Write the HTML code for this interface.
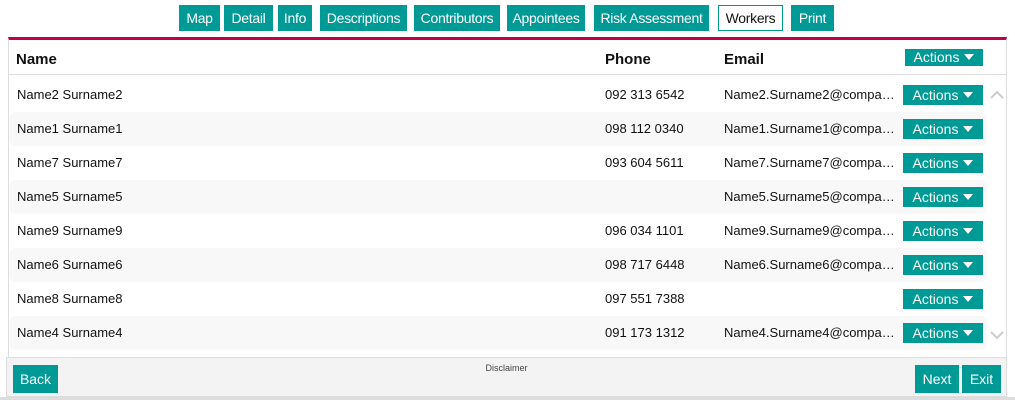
<!DOCTYPE html>
<html><head><style>
*{box-sizing:border-box;margin:0;padding:0}
body{width:1015px;height:400px;background:#fff;font-family:"Liberation Sans",Arial,sans-serif;position:relative;overflow:hidden;color:#111}
.tab{position:absolute;top:5px;height:26px;background:#009a96;color:#fff;font-size:14px;line-height:26px;text-align:center;letter-spacing:-0.3px}
.tab.w{background:#fff;color:#111;border:1px solid #009a96;line-height:24px}
.panel{position:absolute;left:8px;top:37px;width:999px;height:320px;border-top:3px solid #c0004a;border-left:1px solid #ddd;border-right:1px solid #ddd}
.hdr{position:absolute;left:8px;top:40px;width:999px;height:35px;border-bottom:1px solid #ddd;font-weight:bold;font-size:15px}
.hdr span,.row span{position:absolute;top:0}
.row{position:absolute;left:9px;width:978px;height:34px;font-size:13px;line-height:34px;border-radius:6px}
.row.alt{background:#f8f8f8}
.btn{position:absolute;background:#009a96;color:#fff;font-size:14px;text-align:center}
.act{left:894px;top:7px;width:80px;height:20px;line-height:20px}
.tri{display:inline-block;width:0;height:0;border-left:5px solid transparent;border-right:5px solid transparent;border-top:6px solid #fff;margin-left:5px;vertical-align:2px}
.foot{position:absolute;left:6px;top:357px;width:1001px;height:40px;background:#f3f3f3;border:1px solid #ddd}
</style></head><body>
<div class="tab" style="left:179px;width:41px">Map</div>
<div class="tab" style="left:224px;width:49px">Detail</div>
<div class="tab" style="left:278px;width:34px">Info</div>
<div class="tab" style="left:320px;width:87px">Descriptions</div>
<div class="tab" style="left:414px;width:86px">Contributors</div>
<div class="tab" style="left:507px;width:78px">Appointees</div>
<div class="tab" style="left:594px;width:115px">Risk Assessment</div>
<div class="tab w" style="left:718px;width:65px">Workers</div>
<div class="tab" style="left:791px;width:43px">Print</div>
<div class="panel"></div>
<div class="hdr">
<span style="left:8px;top:11px">Name</span>
<span style="left:597px;top:11px">Phone</span>
<span style="left:716px;top:11px">Email</span>
<div class="btn" style="left:897px;top:9px;width:78px;height:17px;line-height:17px;font-weight:normal">Actions<i class="tri"></i></div>
</div>
<div class="row" style="top:78px"><span style="left:8px">Name2 Surname2</span><span style="left:596px">092 313 6542</span><span style="left:715px">Name2.Surname2@compa…</span><div class="btn act">Actions<i class="tri"></i></div></div>
<div class="row alt" style="top:112px"><span style="left:8px">Name1 Surname1</span><span style="left:596px">098 112 0340</span><span style="left:715px">Name1.Surname1@compa…</span><div class="btn act">Actions<i class="tri"></i></div></div>
<div class="row" style="top:146px"><span style="left:8px">Name7 Surname7</span><span style="left:596px">093 604 5611</span><span style="left:715px">Name7.Surname7@compa…</span><div class="btn act">Actions<i class="tri"></i></div></div>
<div class="row alt" style="top:180px"><span style="left:8px">Name5 Surname5</span><span style="left:715px">Name5.Surname5@compa…</span><div class="btn act">Actions<i class="tri"></i></div></div>
<div class="row" style="top:214px"><span style="left:8px">Name9 Surname9</span><span style="left:596px">096 034 1101</span><span style="left:715px">Name9.Surname9@compa…</span><div class="btn act">Actions<i class="tri"></i></div></div>
<div class="row alt" style="top:248px"><span style="left:8px">Name6 Surname6</span><span style="left:596px">098 717 6448</span><span style="left:715px">Name6.Surname6@compa…</span><div class="btn act">Actions<i class="tri"></i></div></div>
<div class="row" style="top:282px"><span style="left:8px">Name8 Surname8</span><span style="left:596px">097 551 7388</span><div class="btn act">Actions<i class="tri"></i></div></div>
<div class="row alt" style="top:316px"><span style="left:8px">Name4 Surname4</span><span style="left:596px">091 173 1312</span><span style="left:715px">Name4.Surname4@compa…</span><div class="btn act">Actions<i class="tri"></i></div></div>
<svg style="position:absolute;left:990px;top:90px" width="14" height="10"><path d="M1 8 L7 2 L13 8" fill="none" stroke="#ccc" stroke-width="2"/></svg>
<svg style="position:absolute;left:990px;top:330px" width="14" height="10"><path d="M1 2 L7 8 L13 2" fill="none" stroke="#ccc" stroke-width="2"/></svg>
<div class="foot">
<div style="position:absolute;left:0;width:100%;top:5px;text-align:center;font-size:9px;color:#444">Disclaimer</div>
<div class="btn" style="left:6px;top:7px;width:45px;height:28px;line-height:28px">Back</div>
<div class="btn" style="left:908px;top:7px;width:44px;height:28px;line-height:28px">Next</div>
<div class="btn" style="left:955px;top:7px;width:39px;height:28px;line-height:28px">Exit</div>
</div>
<div style="position:absolute;left:0;top:397px;width:1015px;height:3px;background:#ddd"></div>
</body></html>
